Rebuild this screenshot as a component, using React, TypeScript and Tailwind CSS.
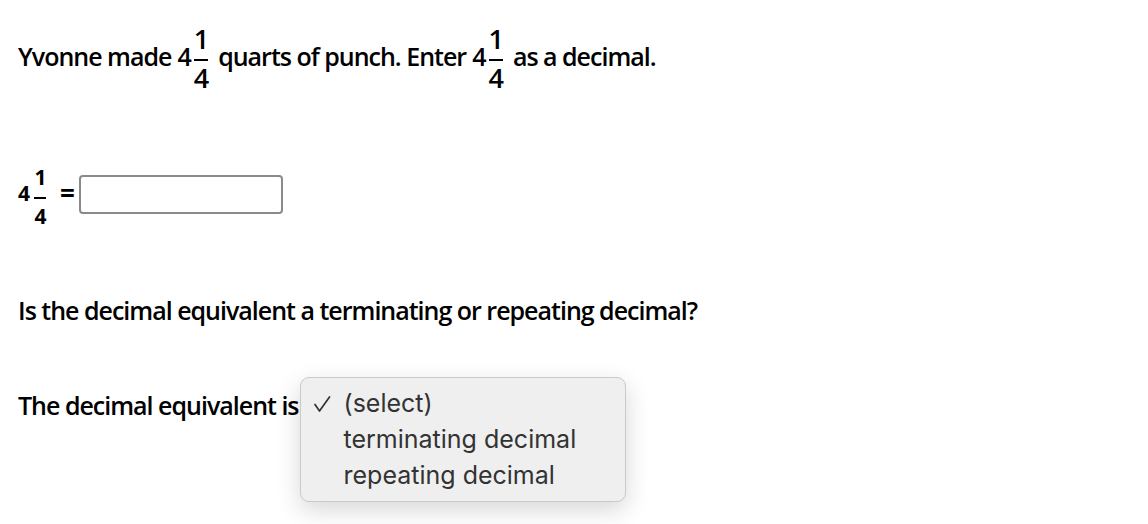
import React from 'react';

interface FracProps {
  num: string;
  den: string;
  digit: string;
  bar: string;
  gapTop: string;
  gapBottom: string;
}

// stacked fraction: numerator, bar, denominator
const Frac: React.FC<FracProps> = ({ num, den, digit, bar, gapTop, gapBottom }) => (
  <span className="flex flex-col items-center">
    <span className={digit}>{num}</span>
    <span className={`block h-[2px] bg-black ${bar} ${gapTop} ${gapBottom}`} />
    <span className={digit}>{den}</span>
  </span>
);

export default function App() {
  return (
    <div className="w-[1148px] h-[524px] bg-white text-black font-['Open_Sans',sans-serif] text-[25px] font-semibold tracking-[-1px] pl-[18px] overflow-hidden">
      {/* line 1 */}
      <div className="h-[100px] flex items-start leading-[34px]">
        <span className="mt-[39px]">Yvonne made</span>
        <span className="mt-[39px] ml-[6px]">4</span>
        <span className="mt-[25px] ml-[3px]">
          <Frac num="1" den="4" digit="text-[27px] leading-none" bar="w-[14px]" gapTop="mt-[7px]" gapBottom="mb-[3px]" />
        </span>
        <span className="mt-[39px] ml-[10px]">quarts of punch. Enter</span>
        <span className="mt-[39px] ml-[6px]">4</span>
        <span className="mt-[25px] ml-[3px]">
          <Frac num="1" den="4" digit="text-[27px] leading-none" bar="w-[14px]" gapTop="mt-[7px]" gapBottom="mb-[3px]" />
        </span>
        <span className="mt-[39px] ml-[10px]">as a decimal.</span>
      </div>

      {/* equation row */}
      <div className="h-[140px] flex items-start text-[21px] font-bold leading-[29px]">
        <span className="mt-[79px]">4</span>
        <span className="mt-[67px] ml-[5px]">
          <Frac num="1" den="4" digit="text-[21px] leading-none" bar="w-[12px]" gapTop="mt-[9px]" gapBottom="mb-[7px]" />
        </span>
        <span className="mt-[79px] ml-[14px] text-[26px] leading-[29px]">=</span>
        <input
          type="text"
          aria-label="decimal"
          className="mt-[75px] ml-[5px] w-[204px] h-[39px] border-2 border-[#8a8a8a] rounded-[4px] bg-white outline-none"
        />
      </div>

      <div className="mt-[53px] leading-[34px]">Is the decimal equivalent a terminating or repeating decimal?</div>

      <div className="mt-[61px] flex items-start leading-[34px]">
        <span>The decimal equivalent is</span>
        <span className="relative ml-[1px] w-[10px] h-[34px]">
          <div className="absolute left-0 top-[-11px] w-[326px] h-[125px] bg-[#efefef] border border-[#cacaca] rounded-[9px] shadow-[0_8px_24px_rgba(0,0,0,0.16)] font-['Inter',sans-serif] font-normal tracking-normal text-[25px] leading-normal text-[#333] pt-[8px]">
            <div className="flex items-center h-[36px]">
              <svg className="ml-[12px] w-[18px] h-[18px]" viewBox="0 0 18 18" fill="none" stroke="#333" strokeWidth="1.7" strokeLinecap="round" strokeLinejoin="round">
                <path d="M2 9.5 L6.5 16 L16.5 2" />
              </svg>
              <span className="ml-[13px]">(select)</span>
            </div>
            <div className="flex items-center h-[36px] pl-[43px]">terminating decimal</div>
            <div className="flex items-center h-[36px] pl-[43px]">repeating decimal</div>
          </div>
        </span>
      </div>
    </div>
  );
}
